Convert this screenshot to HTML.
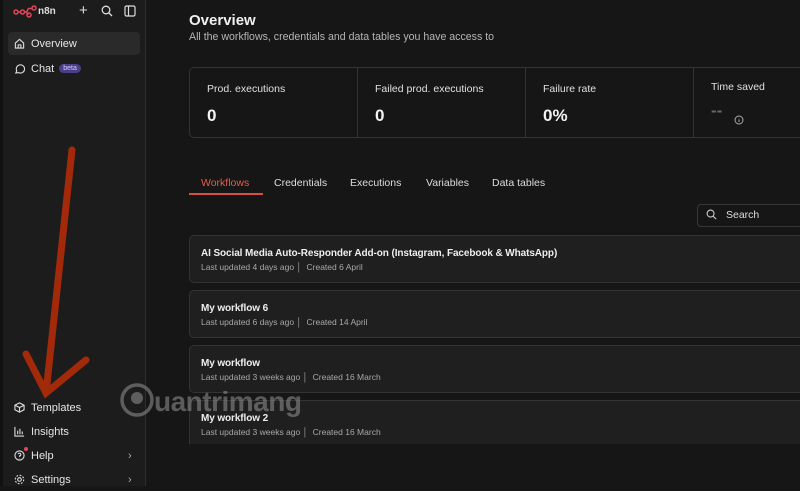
<!DOCTYPE html>
<html><head><meta charset="utf-8"><style>
*{box-sizing:border-box;margin:0;padding:0}
body{width:800px;height:486px;overflow:hidden;background:#161616;font-family:"Liberation Sans",sans-serif;color:#e8e8e8;position:relative}
.sb{position:absolute;left:0;top:0;width:146px;height:486px;background:#1c1c1c;border-right:1px solid #2e2e2e}
.sb .edge{position:absolute;left:0;top:0;width:3px;height:486px;background:#111}
.item{position:absolute;left:8px;width:132px;height:23px;display:flex;align-items:center;font-size:11px;color:#e6e6e6}
.item svg{margin:0 6px 0 6px}
.abs{position:absolute}
.stat{position:absolute;top:67px;height:71px;border:1px solid #333;background:#161616}
.lbl{position:absolute;font-size:10.5px;color:#e0e0e0}
.num{position:absolute;font-size:17px;font-weight:bold;color:#f2f2f2}
.card{position:absolute;left:189px;width:620px;height:48px;background:#1f1f1f;border:1px solid #333;border-radius:5px}
.card .t{position:absolute;left:11px;top:12px;font-size:10px;font-weight:bold;color:#eee;letter-spacing:-0.1px}
.card .s{position:absolute;left:11px;top:26px;font-size:8.5px;color:#a8a8a8}
.tab{position:absolute;top:177px;font-size:10.5px;color:#ddd}
</style></head><body>
<div class="sb"><div class="edge"></div>
<svg class="abs" style="left:13px;top:5px" width="24" height="14" viewBox="0 0 24 14" fill="none" stroke="#e0455b" stroke-width="1.5"><circle cx="3" cy="7" r="2"/><circle cx="9.5" cy="7" r="2"/><circle cx="16" cy="10" r="2"/><circle cx="21" cy="3" r="2"/><path d="M5 7h2.5M11.5 7h2l2 2.5M13.5 7l2-3.5h3.5"/></svg>
<div class="abs" style="left:38px;top:6px;font-size:10px;font-weight:bold;color:#ddd">n8n</div>
<div class="abs" style="left:79px;top:2px;font-size:15px;color:#ddd">+</div>
<svg class="abs" style="left:101px;top:5px" width="12" height="12" viewBox="0 0 12 12" fill="none" stroke="#ddd" stroke-width="1.3"><circle cx="5" cy="5" r="3.8"/><path d="M8 8l3 3"/></svg>
<svg class="abs" style="left:124px;top:5px" width="12" height="12" viewBox="0 0 12 12" fill="none" stroke="#ddd" stroke-width="1.2"><rect x="1" y="1" width="10" height="10" rx="1.5"/><path d="M4.5 1v10"/></svg>
<div class="item" style="top:32px;background:#2a2a2a;border-radius:4px"><svg width="11" height="11" viewBox="0 0 12 12" fill="none" stroke="#ddd" stroke-width="1.2"><path d="M1.5 5.5L6 1.5l4.5 4V11h-9z M4.5 11V7.5h3V11"/></svg>Overview</div>
<div class="item" style="top:57px"><svg width="11" height="11" viewBox="0 0 12 12" fill="none" stroke="#ddd" stroke-width="1.2"><path d="M2 11l1-2.5A4.5 4.5 0 1 1 5 10.5z"/></svg>Chat<span style="margin-left:5px;font-size:7px;background:#4b3f8a;color:#d7d0ff;border-radius:6px;padding:1px 4px">beta</span></div>
<div class="item" style="top:396px"><svg width="11" height="11" viewBox="0 0 12 12" fill="none" stroke="#ddd" stroke-width="1.2"><path d="M6 1l5 2.5v5L6 11 1 8.5v-5z M1 3.5L6 6l5-2.5M6 6v5"/></svg>Templates</div>
<div class="item" style="top:420px"><svg width="11" height="11" viewBox="0 0 12 12" fill="none" stroke="#ddd" stroke-width="1.2"><path d="M1 1v10h10M4 9V5M6.5 9V3M9 9V6"/></svg>Insights</div>
<div class="item" style="top:444px"><svg width="11" height="11" viewBox="0 0 12 12" fill="none" stroke="#ddd" stroke-width="1.2"><circle cx="6" cy="6" r="5"/><path d="M4.5 4.5a1.5 1.5 0 1 1 1.5 2v1M6 9v.3"/></svg>Help<span style="position:absolute;left:120px;color:#aaa">›</span></div>
<div class="abs" style="left:24px;top:447px;width:4px;height:4px;border-radius:2px;background:#e0455b"></div>
<div class="item" style="top:468px"><svg width="11" height="11" viewBox="0 0 12 12" fill="none" stroke="#ddd" stroke-width="1.2"><circle cx="6" cy="6" r="2"/><circle cx="6" cy="6" r="4.6" stroke-dasharray="2 1.6"/></svg>Settings<span style="position:absolute;left:120px;color:#aaa">›</span></div>
</div>

<div class="abs" style="left:189px;top:12px;font-size:15px;font-weight:bold;color:#f0f0f0">Overview</div>
<div class="abs" style="left:189px;top:31px;font-size:10.6px;color:#b5b5b5">All the workflows, credentials and data tables you have access to</div>

<div class="stat" style="left:189px;width:170px;border-radius:5px 0 0 5px"></div>
<div class="stat" style="left:357px;width:170px"></div>
<div class="stat" style="left:525px;width:170px"></div>
<div class="stat" style="left:693px;width:120px"></div>
<div class="lbl" style="left:207px;top:83px">Prod. executions</div><div class="num" style="left:207px;top:106px">0</div>
<div class="lbl" style="left:375px;top:83px">Failed prod. executions</div><div class="num" style="left:375px;top:106px">0</div>
<div class="lbl" style="left:543px;top:83px">Failure rate</div><div class="num" style="left:543px;top:106px">0%</div>
<div class="lbl" style="left:711px;top:81px">Time saved</div><div class="num" style="left:711px;top:101px;color:#666">--</div>
<svg class="abs" style="left:734px;top:115px" width="10" height="10" viewBox="0 0 10 10" fill="none" stroke="#aaa" stroke-width="1"><circle cx="5" cy="5" r="4"/><path d="M5 4.5v2.5M5 3v.3"/></svg>

<div class="tab" style="left:201px;color:#ea5a4a">Workflows</div>
<div class="abs" style="left:189px;top:193px;width:74px;height:2px;background:#d9503f"></div>
<div class="tab" style="left:274px">Credentials</div>
<div class="tab" style="left:350px">Executions</div>
<div class="tab" style="left:426px">Variables</div>
<div class="tab" style="left:492px">Data tables</div>

<div class="abs" style="left:697px;top:204px;width:120px;height:23px;border:1px solid #383838;border-radius:4px;background:#161616"></div>
<svg class="abs" style="left:706px;top:209px" width="11" height="11" viewBox="0 0 12 12" fill="none" stroke="#ccc" stroke-width="1.2"><circle cx="5" cy="5" r="3.8"/><path d="M8 8l3 3"/></svg>
<div class="abs" style="left:726px;top:209px;font-size:10.5px;color:#ddd">Search</div>

<div class="card" style="top:235px"><div class="t">AI Social Media Auto-Responder Add-on (Instagram, Facebook &amp; WhatsApp)</div><div class="s">Last updated 4 days ago&nbsp;│&nbsp; Created 6 April</div></div>
<div class="card" style="top:290px"><div class="t">My workflow 6</div><div class="s">Last updated 6 days ago&nbsp;│&nbsp; Created 14 April</div></div>
<div class="card" style="top:345px"><div class="t">My workflow</div><div class="s">Last updated 3 weeks ago&nbsp;│&nbsp; Created 16 March</div></div>
<div class="card" style="top:400px;height:44px;border-bottom:none;border-radius:5px 5px 0 0"><div class="t">My workflow 2</div><div class="s">Last updated 3 weeks ago&nbsp;│&nbsp; Created 16 March</div></div>

<svg class="abs" style="left:119px;top:382px" width="36" height="36" viewBox="0 0 36 36" fill="none" stroke="#8a8a8a" stroke-width="3.5" opacity=".6"><circle cx="18" cy="18" r="15"/><circle cx="18" cy="16" r="6" fill="#8a8a8a" stroke="none"/></svg>
<div class="abs" style="left:154px;top:386px;font-size:28px;font-weight:bold;color:#8a8a8a;opacity:.6;letter-spacing:-0.5px">uantrimang</div>

<svg class="abs" style="left:0;top:0" width="200" height="486" viewBox="0 0 200 486" fill="none" stroke="#a3290b" stroke-width="7" stroke-linecap="round"><path d="M72 150L46 393M26 354L46 393L86 360"/></svg>
</body></html>
